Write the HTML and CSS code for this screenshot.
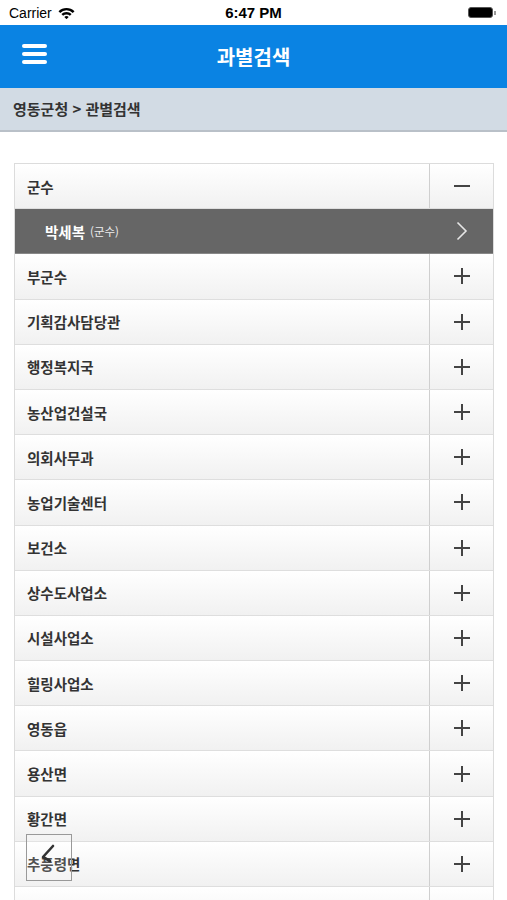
FILE: index.html
```html
<!DOCTYPE html>
<html lang="ko">
<head>
    <meta charset="UTF-8">
    <meta name="viewport" content="width=device-width, initial-scale=1.0">
    <title>과별검색</title>
    <link rel="stylesheet" href="styles.css">
</head>
<body>
    <div class="statusbar">
        <div class="carrier">Carrier
            <svg class="wifi" width="17" height="12" viewBox="0 0 17 12">
                <path d="M0.5 4.2 A11.5 11.5 0 0 1 16.5 4.2 L14.8 5.9 A9 9 0 0 0 2.2 5.9 Z" fill="#000"/>
                <path d="M3.4 7.1 A7.3 7.3 0 0 1 13.6 7.1 L11.9 8.8 A4.8 4.8 0 0 0 5.1 8.8 Z" fill="#000"/>
                <path d="M6.3 10 A3.2 3.2 0 0 1 10.7 10 L8.5 12.2 Z" fill="#000"/>
            </svg>
        </div>
        <div class="time">6:47 PM</div>
        <div class="battery"><span class="battery-fill"></span><span class="battery-tip"></span></div>
    </div>

    <header class="topbar">
        <div class="menu-btn"><span></span><span></span><span></span></div>
        <h1>과별검색</h1>
    </header>

    <div class="breadcrumb">영동군청 &gt; 관별검색</div>

    <div class="list">
        <div class="row">
            <div class="name">군수</div>
            <div class="toggle"><span class="minus"></span></div>
        </div>
        <div class="row person">
            <div class="name">박세복 <small>(군수)</small></div>
            <div class="go">
                <svg width="12" height="20" viewBox="0 0 12 20"><path d="M1.5 1.5 L10 10 L1.5 18.5" fill="none" stroke="#e6e6e6" stroke-width="1.6"/></svg>
            </div>
        </div>
        <div class="row"><div class="name">부군수</div><div class="toggle"><span class="plus"></span></div></div>
        <div class="row"><div class="name">기획감사담당관</div><div class="toggle"><span class="plus"></span></div></div>
        <div class="row"><div class="name">행정복지국</div><div class="toggle"><span class="plus"></span></div></div>
        <div class="row"><div class="name">농산업건설국</div><div class="toggle"><span class="plus"></span></div></div>
        <div class="row"><div class="name">의회사무과</div><div class="toggle"><span class="plus"></span></div></div>
        <div class="row"><div class="name">농업기술센터</div><div class="toggle"><span class="plus"></span></div></div>
        <div class="row"><div class="name">보건소</div><div class="toggle"><span class="plus"></span></div></div>
        <div class="row"><div class="name">상수도사업소</div><div class="toggle"><span class="plus"></span></div></div>
        <div class="row"><div class="name">시설사업소</div><div class="toggle"><span class="plus"></span></div></div>
        <div class="row"><div class="name">힐링사업소</div><div class="toggle"><span class="plus"></span></div></div>
        <div class="row"><div class="name">영동읍</div><div class="toggle"><span class="plus"></span></div></div>
        <div class="row"><div class="name">용산면</div><div class="toggle"><span class="plus"></span></div></div>
        <div class="row"><div class="name">황간면</div><div class="toggle"><span class="plus"></span></div></div>
        <div class="row"><div class="name">추풍령면</div><div class="toggle"><span class="plus"></span></div></div>
        <div class="row"><div class="name"></div><div class="toggle"></div></div>
    </div>

    <div class="float-btn">
        <svg width="44" height="45" viewBox="0 0 44 45">
            <path d="M26 11 L16 22 L23 26" fill="none" stroke="#333" stroke-width="2.6" stroke-linecap="round" stroke-linejoin="round"/>
        </svg>
    </div>
</body>
</html>
```

FILE: styles.css
```css
body {
    margin: 0;
    width: 507px;
    font-family: "Noto Sans CJK KR", "Noto Sans", sans-serif;
    background: #fff;
    color: #333;
    position: relative;
    overflow: hidden;
    height: 900px;
}
.statusbar {
    height: 25px;
    display: flex;
    align-items: center;
    justify-content: space-between;
    padding: 0 9px;
    font-family: "Liberation Sans", Arial, sans-serif;
    color: #000;
    position: relative;
}
.carrier {
    font-size: 14px;
    display: flex;
    align-items: center;
    gap: 6px;
}
.time {
    position: absolute;
    left: 0;
    right: 0;
    text-align: center;
    font-size: 15px;
    font-weight: bold;
}
.battery {
    display: flex;
    align-items: center;
    margin-right: 2px;
}
.battery-fill {
    width: 23px;
    height: 9px;
    background: #000;
    border: 1.5px solid #555;
    border-radius: 3px;
}
.battery-tip {
    width: 2px;
    height: 4px;
    background: #999;
    margin-left: 1px;
}
.topbar {
    height: 63px;
    background: #0a83e3;
    display: flex;
    align-items: center;
    justify-content: center;
    position: relative;
}
.topbar h1 {
    margin: 0;
    color: #fff;
    font-size: 20px;
    font-weight: bold;
}
.menu-btn {
    position: absolute;
    left: 22px;
    top: 19px;
    display: flex;
    flex-direction: column;
    gap: 4px;
}
.menu-btn span {
    width: 25px;
    height: 4px;
    background: #fff;
    border-radius: 2px;
}
.breadcrumb {
    height: 42px;
    line-height: 42px;
    background: #d2dbe4;
    border-bottom: 2px solid #b9c0c8;
    padding-left: 13px;
    font-size: 15px;
    font-weight: bold;
    color: #333;
}
.list {
    margin: 31px 13px 0 14px;
    border: 1px solid #dcdcdc;
    border-bottom: none;
}
.row {
    display: flex;
    height: 45.2px;
    box-sizing: border-box;
    border-bottom: 1px solid #dedede;
    background: linear-gradient(#ffffff, #f1f1f1);
}
.name {
    flex: 1;
    display: flex;
    align-items: center;
    padding-left: 12px;
    font-size: 14.5px;
    font-weight: bold;
    color: #333;
}
.toggle {
    width: 63px;
    border-left: 1px solid #cfcfcf;
    display: flex;
    align-items: center;
    justify-content: center;
    position: relative;
}
.minus, .plus {
    display: block;
    width: 16px;
    height: 16px;
    position: relative;
}
.minus::before, .plus::before, .plus::after {
    content: "";
    position: absolute;
    background: #444;
}
.minus::before, .plus::before {
    left: 0;
    top: 7px;
    width: 16px;
    height: 2px;
}
.plus::after {
    left: 7px;
    top: 0;
    width: 2px;
    height: 16px;
}
.row.person {
    background: #666;
    border-bottom: 1px solid #888;
}
.person .name {
    color: #fff;
    padding-left: 30px;
    font-size: 14.5px;
}
.person small {
    font-size: 11.5px;
    font-weight: normal;
    color: #eee;
    margin-left: 5px;
}
.go {
    width: 63px;
    display: flex;
    align-items: center;
    justify-content: center;
    padding-left: 2px;
}
.float-btn {
    position: absolute;
    left: 26px;
    top: 834px;
    width: 44px;
    height: 45px;
    border: 1px solid #999;
    background: rgba(255, 255, 255, 0.15);
}
.float-btn svg {
    display: block;
}
```
